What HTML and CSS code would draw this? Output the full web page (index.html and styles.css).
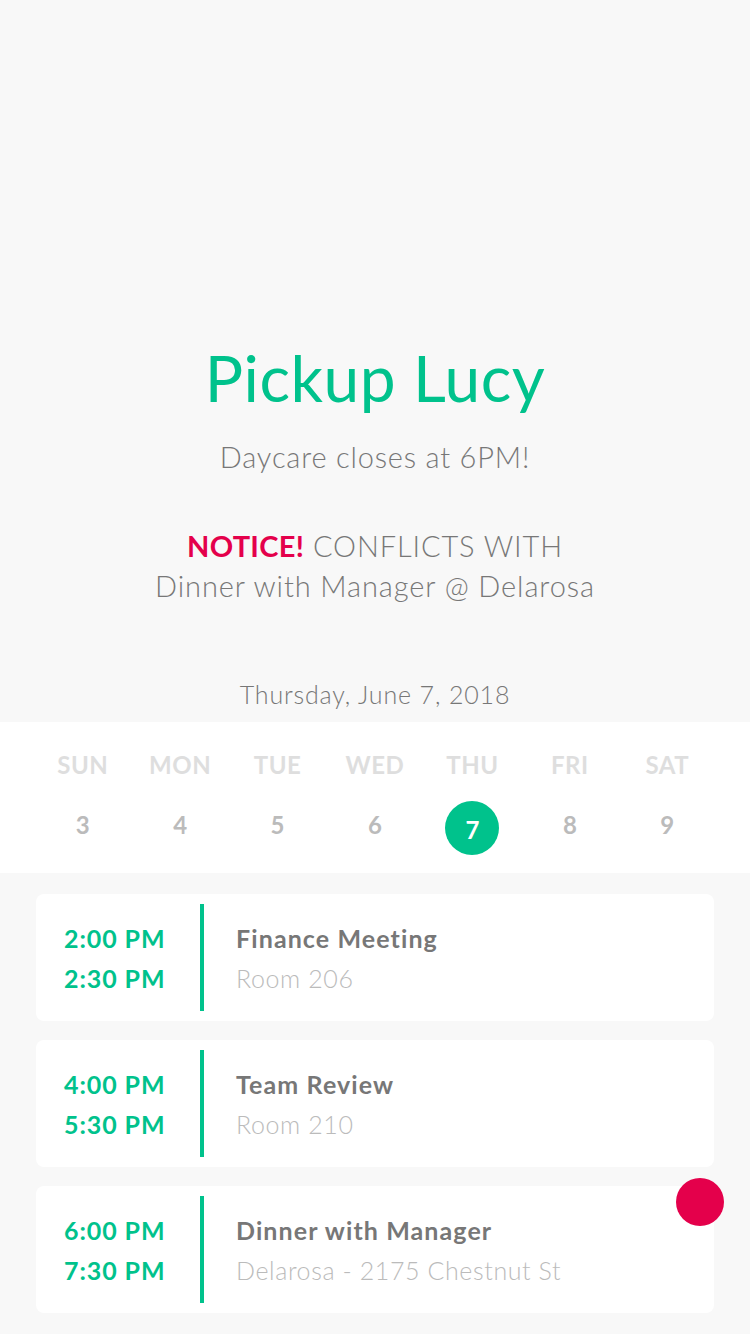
FILE: index.html
```html
<!DOCTYPE html>
<html>
<head>
<meta charset="utf-8">
<link rel="stylesheet" href="styles.css">
</head>
<body>
<div class="screen">
  <section class="hero">
    <h1 class="title">Pickup Lucy</h1>
    <p class="subtitle">Daycare closes at 6PM!</p>
    <p class="notice"><span class="notice-tag">NOTICE!</span> CONFLICTS WITH<br>Dinner with Manager @ Delarosa</p>
    <p class="date">Thursday, June 7, 2018</p>
  </section>
  <section class="week">
    <div class="day"><span class="dname">SUN</span><span class="dnum">3</span></div>
    <div class="day"><span class="dname">MON</span><span class="dnum">4</span></div>
    <div class="day"><span class="dname">TUE</span><span class="dnum">5</span></div>
    <div class="day"><span class="dname">WED</span><span class="dnum">6</span></div>
    <div class="day"><span class="dname">THU</span><span class="dnum active">7</span></div>
    <div class="day"><span class="dname">FRI</span><span class="dnum">8</span></div>
    <div class="day"><span class="dname">SAT</span><span class="dnum">9</span></div>
  </section>
  <section class="events">
    <div class="card">
      <div class="times"><span>2:00 PM</span><span>2:30 PM</span></div>
      <div class="info"><span class="ev-title">Finance Meeting</span><span class="ev-place">Room 206</span></div>
    </div>
    <div class="card">
      <div class="times"><span>4:00 PM</span><span>5:30 PM</span></div>
      <div class="info"><span class="ev-title">Team Review</span><span class="ev-place">Room 210</span></div>
    </div>
    <div class="card">
      <div class="times"><span>6:00 PM</span><span>7:30 PM</span></div>
      <div class="info"><span class="ev-title">Dinner with Manager</span><span class="ev-place">Delarosa - 2175 Chestnut St</span></div>
      <span class="dot"></span>
    </div>
  </section>
</div>
</body>
</html>
```

FILE: styles.css
```css
* { box-sizing: border-box; margin: 0; padding: 0; }
html, body { background: #f8f8f8; }
body { width: 750px; height: 1334px; overflow: hidden; font-family: "Lato", "Open Sans", sans-serif; }
.screen { width: 750px; height: 1334px; display: flex; flex-direction: column; }

.hero { display: flex; flex-direction: column; align-items: center; padding-top: 334px; text-align: center; }
.title { font-size: 64px; font-weight: 400; color: #00c28c; line-height: 88px; letter-spacing: 0.5px; }
.subtitle { margin-top: 15px; font-size: 29px; font-weight: 300; color: #777; line-height: 40px; letter-spacing: 0.8px; }
.notice { margin-top: 49px; font-size: 29px; font-weight: 300; color: #777; line-height: 40px; letter-spacing: 0.9px; }
.notice-tag { color: #e4004b; font-weight: 700; letter-spacing: 0.3px; }
.date { margin-top: 70px; font-size: 25px; font-weight: 300; color: #777; line-height: 36px; letter-spacing: 0.85px; }

.week { margin-top: 10px; background: #fff; height: 151px; display: grid; grid-template-columns: repeat(7, 1fr); padding: 0 34px; }
.day { display: flex; flex-direction: column; align-items: center; padding-top: 28px; }
.dname { font-size: 24px; font-weight: 700; color: #dedede; line-height: 30px; letter-spacing: 0.5px; }
.dnum { margin-top: 21px; width: 54px; height: 54px; border-radius: 50%; display: flex; align-items: center; justify-content: center; font-size: 24px; font-weight: 700; color: #bbb; padding-bottom: 8px; }
.dnum.active { background: #00c28c; color: #fff; padding-bottom: 0; padding-top: 2px; }

.events { padding: 21px 36px 0; display: flex; flex-direction: column; gap: 19px; }
.card { position: relative; background: #fff; border-radius: 8px; height: 127px; display: flex; align-items: stretch; padding: 10px 0; }
.times { width: 168px; padding-left: 28px; display: flex; flex-direction: column; justify-content: center; gap: 10px; font-size: 25px; font-weight: 700; color: #00c28c; line-height: 30px; letter-spacing: 0.9px; border-right: 4px solid #00c28c; }
.info { padding-left: 32px; display: flex; flex-direction: column; justify-content: center; gap: 10px; line-height: 30px; font-size: 25px; }
.ev-title { font-weight: 700; color: #777; letter-spacing: 1.1px; }
.ev-place { font-weight: 300; color: #bbb; letter-spacing: 0.6px; }
.dot { position: absolute; right: -10px; top: -8px; width: 48px; height: 48px; border-radius: 50%; background: #e4004b; }
```
